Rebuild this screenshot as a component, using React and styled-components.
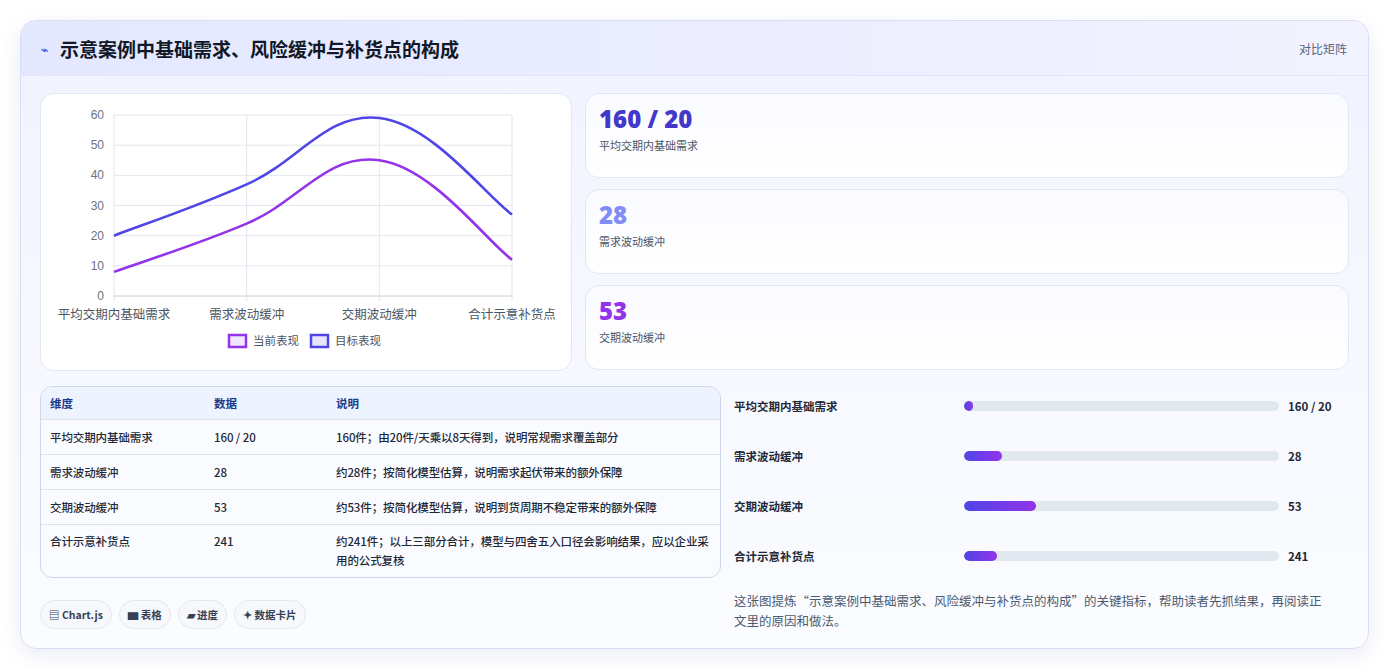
import styled, { createGlobalStyle } from "styled-components";

const GlobalStyle = createGlobalStyle`
  body { margin: 0; background: #ffffff; font-family: "Noto Sans CJK SC", "Noto Sans", sans-serif; }
  * { box-sizing: border-box; }
`;

const labels = ["平均交期内基础需求", "需求波动缓冲", "交期波动缓冲", "合计示意补货点"];
const current = [8, 24, 45, 12];
const target = [20, 37, 59, 27];

const rows = [
  ["平均交期内基础需求", "160 / 20", "160件；由20件/天乘以8天得到，说明常规需求覆盖部分"],
  ["需求波动缓冲", "28", "约28件；按简化模型估算，说明需求起伏带来的额外保障"],
  ["交期波动缓冲", "53", "约53件；按简化模型估算，说明到货周期不稳定带来的额外保障"],
  ["合计示意补货点", "241", "约241件；以上三部分合计，模型与四舍五入口径会影响结果，应以企业采用的公式复核"],
];

const bars = [
  ["平均交期内基础需求", "160 / 20", 3],
  ["需求波动缓冲", "28", 12],
  ["交期波动缓冲", "53", 23],
  ["合计示意补货点", "241", 10.5],
];

const Page = styled.div`
  padding: 20px 21px 20px 20px;
`;

const Card = styled.div`
  border: 1px solid #d9def7;
  border-radius: 16px;
  background: linear-gradient(180deg, #f0f3ff 0%, #f8f9ff 60%, #fbfcff 100%);
  box-shadow: 0 6px 20px rgba(90, 100, 180, 0.12);
  overflow: hidden;
`;

const Header = styled.div`
  height: 55px;
  display: flex;
  align-items: center;
  justify-content: space-between;
  padding: 0 21px 0 20px;
  background: linear-gradient(90deg, #e4e8ff 0%, #eceeff 60%, #f3f3ff 100%);
  border-bottom: 1px solid #e2e6f8;
`;

const Title = styled.h1`
  margin: 0;
  font-size: 19px;
  font-weight: 700;
  color: #111827;
  display: flex;
  align-items: center;
  gap: 12px;
`;

const Tag = styled.span`
  font-size: 12px;
  color: #5b6478;
`;

const Body = styled.div`
  padding: 17px 19px 17px 19px;
  display: flex;
  flex-direction: column;
  gap: 15px;
`;

const TopRow = styled.div`
  display: grid;
  grid-template-columns: 532px 1fr;
  gap: 13px;
`;

const Panel = styled.div`
  background: #ffffff;
  border: 1px solid #e2e7f3;
  border-radius: 14px;
`;

const ChartPanel = styled(Panel)`
  height: 278px;
  position: relative;
`;

const Stats = styled.div`
  display: flex;
  flex-direction: column;
  gap: 11px;
`;

const Stat = styled(Panel)`
  height: 85px;
  padding: 11px 13px;
  background: linear-gradient(180deg, #fafbff, #ffffff);
`;

const StatValue = styled.div`
  font-family: "Noto Sans", sans-serif;
  font-size: 24px;
  font-weight: 900;
  line-height: 28px;
  color: ${(p) => p.$color};
`;

const StatLabel = styled.div`
  margin-top: 4px;
  font-size: 11px;
  color: #4b5563;
`;

const BottomRow = styled.div`
  display: grid;
  grid-template-columns: 681px 1fr;
  gap: 13px;
`;

const Left = styled.div`
  display: flex;
  flex-direction: column;
  gap: 22px;
`;

const Table = styled.div`
  border: 1px solid #cfd8ea;
  border-radius: 12px;
  overflow: hidden;
  background: #fafbfe;
  font-size: 11.5px;
  color: #1f2937;
`;

const TRow = styled.div`
  display: grid;
  grid-template-columns: 164px 122px 1fr;
  padding: 0 10px 0 9px;
  min-height: ${(p) => (p.$head ? 32 : 35)}px;
  align-items: ${(p) => (p.$tall ? "start" : "center")};
  padding-top: ${(p) => (p.$tall ? 7 : 0)}px;
  padding-bottom: ${(p) => (p.$tall ? 7 : 0)}px;
  background: ${(p) => (p.$head ? "#eef4ff" : "transparent")};
  color: ${(p) => (p.$head ? "#1e3a8a" : "#1f2937")};
  font-weight: ${(p) => (p.$head ? 600 : 500)};
  border-top: ${(p) => (p.$first ? "none" : "1px solid #dde3ee")};
  line-height: 19px;
  letter-spacing: -0.1px;
`;

const Chips = styled.div`
  display: flex;
  gap: 7px;
`;

const Chip = styled.span`
  height: 29px;
  padding: 0 8px;
  display: flex;
  align-items: center;
  gap: 2px;
  border: 1px solid #e3e7f0;
  border-radius: 15px;
  background: #f7f8fc;
  font-size: 10.5px;
  font-weight: 600;
  color: #374151;
`;

const Right = styled.div`
  display: flex;
  flex-direction: column;
  margin-top: -5px;
  padding-right: 16px;
`;

const BarRow = styled.div`
  height: 50px;
  display: grid;
  grid-template-columns: 221px 315px 1fr;
  gap: 0 9px;
  align-items: center;
  font-size: 11.5px;
  font-weight: 600;
  color: #1f2937;
`;

const Track = styled.div`
  height: 10px;
  border-radius: 5px;
  background: #e2e8f0;
  overflow: hidden;
`;

const Fill = styled.div`
  height: 100%;
  border-radius: 5px;
  background: linear-gradient(90deg, #4f46e5, #9333ea);
`;

const Note = styled.p`
  margin: 10px 0 0;
  font-size: 12.5px;
  line-height: 20px;
  color: #4b5a70;
`;

const X0 = 73, X1 = 471, Y0 = 202, Y1 = 21;
const xs = labels.map((_, i) => X0 + ((X1 - X0) * i) / 3);
const yv = (v) => Y0 - ((Y0 - Y1) * v) / 60;

function curve(data) {
  const pts = data.map((v, i) => [xs[i], yv(v)]);
  const t = 0.4;
  let d = `M${pts[0][0]},${pts[0][1]}`;
  for (let i = 0; i < pts.length - 1; i++) {
    const p0 = pts[i - 1] || pts[i];
    const p1 = pts[i];
    const p2 = pts[i + 1];
    const p3 = pts[i + 2] || p2;
    const c1 = [p1[0] + ((p2[0] - p0[0]) * t) / 2, p1[1] + ((p2[1] - p0[1]) * t) / 2];
    const c2 = [p2[0] - ((p3[0] - p1[0]) * t) / 2, p2[1] - ((p3[1] - p1[1]) * t) / 2];
    d += ` C${c1[0]},${c1[1]} ${c2[0]},${c2[1]} ${p2[0]},${p2[1]}`;
  }
  return d;
}

function Chart() {
  const ticks = [0, 10, 20, 30, 40, 50, 60];
  return (
    <svg width="531" height="276" style={{ display: "block" }}>
      {ticks.map((t) => (
        <g key={t}>
          <line x1={X0} x2={X1} y1={yv(t)} y2={yv(t)} stroke="#e3e6ee" />
          <text x={X0 - 10} y={yv(t) + 4} textAnchor="end" fontSize="12" fill="#6b7280" fontFamily="Liberation Sans, sans-serif">{t}</text>
        </g>
      ))}
      {xs.map((x, i) => (
        <g key={i}>
          <line x1={x} x2={x} y1={Y1} y2={Y0 + 5} stroke="#e3e6ee" />
          <text x={x} y={Y0 + 23} textAnchor="middle" fontSize="12.5" fill="#4b5563" fontFamily="Noto Sans CJK SC, sans-serif">{labels[i]}</text>
        </g>
      ))}
      <line x1={X0} x2={X1} y1={Y0} y2={Y0} stroke="#d4d8e2" />
      <path d={curve(target)} fill="none" stroke="#4f46e5" strokeWidth="2.6" />
      <path d={curve(current)} fill="none" stroke="#9333ea" strokeWidth="2.6" />
      <rect x="188" y="241" width="17" height="12" fill="#f1e6fd" stroke="#9333ea" strokeWidth="2.5" />
      <text x="212" y="251" fontSize="11.5" fill="#4b5563" fontFamily="Noto Sans CJK SC, sans-serif">当前表现</text>
      <rect x="270" y="241" width="17" height="12" fill="#e6e6fb" stroke="#4f46e5" strokeWidth="2.5" />
      <text x="294" y="251" fontSize="11.5" fill="#4b5563" fontFamily="Noto Sans CJK SC, sans-serif">目标表现</text>
    </svg>
  );
}

export default function App() {
  return (
    <Page>
      <GlobalStyle />
      <Card>
        <Header>
          <Title>
            <span style={{ color: "#3b6fe0", fontSize: 12 }}>⌁</span>
            示意案例中基础需求、风险缓冲与补货点的构成
          </Title>
          <Tag>对比矩阵</Tag>
        </Header>
        <Body>
          <TopRow>
            <ChartPanel>
              <Chart />
            </ChartPanel>
            <Stats>
              <Stat>
                <StatValue $color="#4338ca">160 / 20</StatValue>
                <StatLabel>平均交期内基础需求</StatLabel>
              </Stat>
              <Stat>
                <StatValue $color="#818cf8">28</StatValue>
                <StatLabel>需求波动缓冲</StatLabel>
              </Stat>
              <Stat>
                <StatValue $color="#9333ea">53</StatValue>
                <StatLabel>交期波动缓冲</StatLabel>
              </Stat>
            </Stats>
          </TopRow>
          <BottomRow>
            <Left>
              <Table>
                <TRow $head $first>
                  <span>维度</span>
                  <span>数据</span>
                  <span>说明</span>
                </TRow>
                {rows.map((r, i) => (
                  <TRow key={i} $tall={i === 3}>
                    <span>{r[0]}</span>
                    <span>{r[1]}</span>
                    <span>{r[2]}</span>
                  </TRow>
                ))}
              </Table>
              <Chips>
                <Chip>▤ Chart.js</Chip>
                <Chip>▆ 表格</Chip>
                <Chip>▰ 进度</Chip>
                <Chip>✦ 数据卡片</Chip>
              </Chips>
            </Left>
            <Right>
              {bars.map((b, i) => (
                <BarRow key={i}>
                  <span>{b[0]}</span>
                  <Track>
                    <Fill style={{ width: `${b[2]}%` }} />
                  </Track>
                  <span>{b[1]}</span>
                </BarRow>
              ))}
              <Note>这张图提炼“示意案例中基础需求、风险缓冲与补货点的构成”的关键指标，帮助读者先抓结果，再阅读正文里的原因和做法。</Note>
            </Right>
          </BottomRow>
        </Body>
      </Card>
    </Page>
  );
}
